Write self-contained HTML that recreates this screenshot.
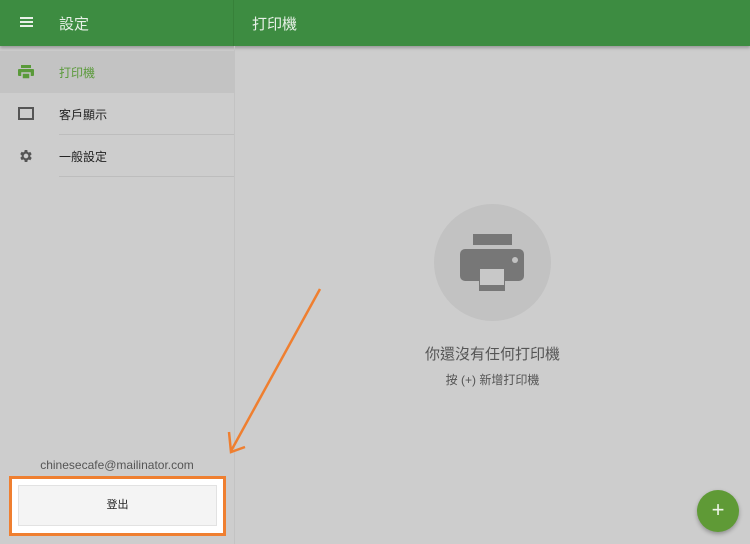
<!DOCTYPE html>
<html><head><meta charset="utf-8"><style>
*{margin:0;padding:0;box-sizing:border-box}
body{width:750px;height:544px;overflow:hidden;background:#cdcdcd;font-family:"Liberation Sans","Noto Sans CJK TC",sans-serif;position:relative}
.hdr{position:absolute;left:0;top:0;width:750px;height:46px;background:#3d8c41;box-shadow:0 2px 3px rgba(0,0,0,.25)}
.hdr .sep{position:absolute;left:233px;top:0;width:1px;height:46px;background:#378139}
.t{position:absolute;color:#e8f1e8;font-size:15px}
.vline{position:absolute;left:234px;top:46px;width:1px;height:498px;background:#c3c3c3}
.row{position:absolute;left:0;width:234px;height:42px;font-size:12px;color:#222}
.row span{position:absolute;left:59px;top:13px}
.row .ln{position:absolute;left:59px;right:0;bottom:0;height:1px;background:#bdbdbd}
</style></head><body>
<div class="hdr"><div class="sep"></div>
<div style="position:absolute;left:20px;top:17px;width:13px;height:2px;background:#e8f1e8;box-shadow:0 4px 0 #e8f1e8,0 8px 0 #e8f1e8"></div>
<div class="t" style="left:59px;top:13px">設定</div>
<div class="t" style="left:252px;top:13px">打印機</div>
</div>
<div class="vline"></div>
<div class="row" style="top:51px;background:#c3c3c3"><span style="color:#5a9a3a">打印機</span>
<svg style="position:absolute;left:18px;top:14px" width="16" height="14" viewBox="0 0 16 14"><rect x="3" y="0" width="10" height="3" fill="#5a9a3a"/><rect x="0" y="4" width="16" height="7" rx="1" fill="#5a9a3a"/><rect x="4" y="8" width="8" height="6" fill="#5a9a3a" stroke="#c3c3c3" stroke-width="1.5"/></svg>
</div>
<div class="row" style="top:93px"><span>客戶顯示</span><div class="ln"></div>
<div style="position:absolute;left:18px;top:14px;width:16px;height:13px;border:2px solid #555"></div></div>
<div class="row" style="top:135px"><span>一般設定</span><div class="ln"></div>
<svg style="position:absolute;left:18px;top:13px" width="16" height="16" viewBox="0 0 24 24"><path fill="#555" d="M19.4 13a7.6 7.6 0 000-2l2.1-1.6-2-3.5-2.5 1a7 7 0 00-1.7-1L15 3h-4l-.4 2.7a7 7 0 00-1.7 1l-2.5-1-2 3.5L6.6 11a7.6 7.6 0 000 2l-2.1 1.6 2 3.5 2.5-1a7 7 0 001.7 1L11 21h4l.4-2.7a7 7 0 001.7-1l2.5 1 2-3.5zM13 15.5a3.5 3.5 0 110-7 3.5 3.5 0 010 7z" transform="translate(-1 0)"/></svg></div>
<div style="position:absolute;left:0;width:234px;top:458px;text-align:center;font-size:12px;color:#555">chinesecafe@mailinator.com</div>
<div style="position:absolute;left:9px;top:476px;width:217px;height:60px;border:3px solid #ef7f30;background:#fff"></div>
<div style="position:absolute;left:18px;top:485px;width:199px;height:41px;background:#f4f4f4;border:1px solid #e2e2e2;text-align:center;line-height:39px;font-size:11px;color:#222">登出</div>
<div style="position:absolute;left:434px;top:204px;width:117px;height:117px;border-radius:50%;background:#c2c2c2"></div>
<svg style="position:absolute;left:460px;top:234px" width="64" height="58" viewBox="0 0 64 58"><rect x="13" y="0" width="39" height="11" fill="#777"/><rect x="0" y="15" width="64" height="32" rx="5" fill="#777"/><circle cx="55" cy="26" r="3" fill="#c2c2c2"/><rect x="19" y="34" width="26" height="23" fill="#777"/><rect x="20" y="35" width="24" height="16" fill="#c8c8c8"/></svg>
<div style="position:absolute;left:235px;width:515px;top:343px;text-align:center;font-size:15px;color:#555">你還沒有任何打印機</div>
<div style="position:absolute;left:235px;width:515px;top:371px;text-align:center;font-size:12px;color:#555">按 (+) 新增打印機</div>
<svg style="position:absolute;left:0;top:0" width="750" height="544"><path d="M320 289 L231 451 M229 432 L231 452 L245 447" stroke="#ef7f30" stroke-width="2.5" fill="none"/></svg>
<div style="position:absolute;left:697px;top:490px;width:42px;height:42px;border-radius:50%;background:#5f9a36;box-shadow:0 2px 4px rgba(0,0,0,.3);color:#eef5e8;font-size:22px;text-align:center;line-height:40px">+</div>
</body></html>
